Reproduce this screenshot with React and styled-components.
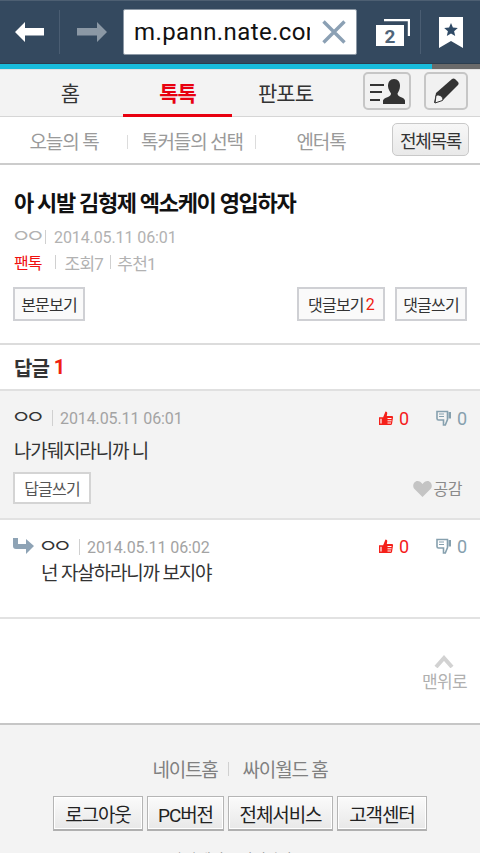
import { createGlobalStyle } from 'styled-components';
import styled from 'styled-components';

const GlobalStyle = createGlobalStyle`
  html, body {
    margin: 0;
    padding: 0;
    height: 853px;
    overflow: hidden;
    background: #fff;
  }
  body {
    font-family: "Roboto", "Noto Sans CJK KR", sans-serif;
  }
`;

const Page = styled.div`
  width: 480px;
  height: 853px;
  overflow: hidden;
`;

const BrowserBar = styled.div`
  height: 62px;
  background: #34495f;
  border-top: 1px solid #4d5f72;
  display: flex;
  align-items: center;
`;

const NavIcon = styled.div`
  width: 59px;
  height: 44px;
  display: flex;
  align-items: center;
  justify-content: center;
  flex: none;
`;

const ForwardIcon = styled(NavIcon)`
  width: 64px;
  border-left: 1px solid #4a5d72;
  margin-right: -1px;
`;

const UrlBox = styled.div`
  width: 234px;
  height: 46px;
  background: #fff;
  border: 1px solid #8d99a6;
  border-radius: 2px;
  display: flex;
  align-items: center;
  padding-left: 10px;
  box-sizing: border-box;
  overflow: hidden;
  flex: none;
`;

const UrlText = styled.div`
  width: 176px;
  margin-right: 12px;
  flex: none;
  overflow: hidden;
  white-space: nowrap;
  font-family: "Roboto", sans-serif;
  font-size: 24px;
  color: #111;
  letter-spacing: 0.4px;
`;

const TabCount = styled.div`
  width: 63px;
  padding-left: 9px;
  box-sizing: border-box;
  height: 44px;
  display: flex;
  align-items: center;
  justify-content: center;
  flex: none;
`;

const BookmarkButton = styled.div`
  width: 59px;
  height: 44px;
  border-left: 1px solid #4a5d72;
  display: flex;
  align-items: center;
  justify-content: center;
  flex: none;
`;

const Progress = styled.div`
  height: 5px;
  background: #6a6a6a;
  border-top: 1px solid #2b3d4e;
`;

const ProgressFill = styled.div`
  height: 5px;
  background: #18bcdc;
`;

const MainNav = styled.div`
  height: 46px;
  background: #f3f3f3;
  border-top: 1px solid #e4e4e4;
  border-bottom: 1px solid #d6d6d6;
  display: flex;
  align-items: stretch;
`;

const MainTab = styled.div`
  width: ${(p) => p.$w}px;
  padding-left: ${(p) => p.$pl || 0}px;
  display: flex;
  align-items: center;
  justify-content: center;
  font-size: 21px;
  letter-spacing: -1px;
  font-weight: ${(p) => (p.$active ? 700 : 400)};
  color: ${(p) => (p.$active ? '#e8000f' : '#333')};
  box-sizing: border-box;
  margin-bottom: -1px;
  border-bottom: 3px solid ${(p) => (p.$active ? '#e8000f' : 'transparent')};
  flex: none;
`;

const IconButton = styled.div`
  width: ${(p) => p.$w}px;
  height: 38px;
  margin-top: 2px;
  margin-left: ${(p) => p.$ml}px;
  box-sizing: border-box;
  border: 2px solid #c6c6c6;
  border-radius: 5px;
  background: #f1f1f1;
  display: flex;
  align-items: center;
  justify-content: center;
  flex: none;
`;

const SubNav = styled.div`
  height: 46px;
  border-bottom: 2px solid #cccccc;
  display: flex;
  align-items: center;
  background: #fff;
`;

const SubTab = styled.div`
  width: ${(p) => p.$w}px;
  text-align: center;
  font-size: 19px;
  letter-spacing: -1.1px;
  color: #9a9a9a;
  flex: none;
  position: relative;
  &::after {
    content: '';
    display: ${(p) => (p.$line ? 'block' : 'none')};
    position: absolute;
    right: 0;
    top: 8px;
    height: 14px;
    width: 1px;
    background: #dcdcdc;
  }
`;

const AllListButton = styled.div`
  width: 77px;
  height: 33px;
  margin-left: 6px;
  margin-top: -1px;
  box-sizing: border-box;
  border: 1px solid #c9c9c9;
  border-radius: 5px;
  background: linear-gradient(#f7f7f7, #e9e9e9);
  display: flex;
  align-items: center;
  justify-content: center;
  font-size: 18px;
  letter-spacing: -1.3px;
  color: #333;
  flex: none;
`;

const Article = styled.div`
  height: 180px;
  padding: 24px 13px 0 13px;
  box-sizing: border-box;
  border-bottom: 2px solid #dcdcdc;
`;

const Title = styled.div`
  font-size: 22px;
  line-height: 30px;
  font-weight: 700;
  letter-spacing: -1.33px;
  color: #111;
  white-space: nowrap;
  margin-left: 1px;
`;

const MetaRow = styled.div`
  display: flex;
  align-items: center;
  margin-top: ${(p) => p.$mt}px;
  margin-left: 1px;
  height: 20px;
  font-size: 16px;
  color: #b2b2b2;
`;

// the jamo are wide flat rings in the reference, hence the squash
const Author = styled.span`
  display: block;
  width: 26px;
  flex: none;
  height: 20px;
  line-height: 20px;
  font-size: 22px;
  letter-spacing: -6px;
  white-space: nowrap;
  color: ${(p) => p.$color || '#b2b2b2'};
  transform: scaleY(0.78);
  text-indent: -3px;
`;

const Sep = styled.span`
  width: 1px;
  height: ${(p) => p.$h || 14}px;
  background: #d0d0d0;
  margin: ${(p) => p.$m};
  flex: none;
`;

const MetaDate = styled.span`
  letter-spacing: -0.1px;
`;

const Category = styled.span`
  color: #f01010;
  font-size: 16px;
  letter-spacing: -1px;
`;

const Stat = styled.span`
  font-size: 17px;
  letter-spacing: -0.7px;
  color: #b2b2b2;
`;

const ActionRow = styled.div`
  display: flex;
  margin-top: 15px;
`;

const OutlineButton = styled.div`
  height: 34px;
  width: ${(p) => p.$w}px;
  margin-left: ${(p) => p.$ml || 0}px;
  box-sizing: border-box;
  border: 2px solid #cfd0d4;
  background: #fafafa;
  display: flex;
  align-items: center;
  justify-content: center;
  font-size: 16px;
  letter-spacing: -0.8px;
  color: #333;
  flex: none;
`;

const Red = styled.span`
  color: #f02010;
  margin-left: 2px;
`;

const ReplyHeader = styled.div`
  height: 44px;
  padding-left: 14px;
  display: flex;
  align-items: center;
  font-size: 20px;
  font-weight: 700;
  letter-spacing: -1px;
  color: #333;
  border-bottom: 2px solid #e0e0e0;
`;

const RedCount = styled.span`
  color: #f02010;
  margin-left: 5px;
`;

const Comment = styled.div`
  height: ${(p) => p.$h}px;
  background: ${(p) => (p.$grey ? '#f3f3f3' : '#fff')};
  border-bottom: 2px solid #e2e2e2;
  padding: ${(p) => p.$pad};
`;

const CommentTop = styled.div`
  display: flex;
  align-items: center;
  height: 24px;
`;

const ReplyArrow = styled.div`
  width: 28px;
  flex: none;
  display: flex;
  margin-top: -3px;
`;

const CommentDate = styled.span`
  font-size: 16px;
  color: #a3a3a3;
  white-space: nowrap;
  letter-spacing: -0.1px;
`;

const Votes = styled.div`
  margin-left: auto;
  display: flex;
  align-items: center;
  margin-top: ${(p) => p.$mt || 0}px;
`;

const VoteCount = styled.span`
  font-size: 18px;
  width: ${(p) => p.$w}px;
  margin-left: 5px;
  color: ${(p) => p.$color};
`;

const CommentText = styled.div`
  font-size: 19px;
  letter-spacing: -1.15px;
  color: #333;
  line-height: 26px;
  margin-top: ${(p) => p.$mt}px;
  margin-left: ${(p) => p.$ml || 0}px;
  white-space: nowrap;
`;

const CommentActions = styled.div`
  display: flex;
  align-items: center;
  margin-top: 7px;
  margin-left: -1px;
  padding-right: 4px;
`;

const ReplyButton = styled.div`
  width: 78px;
  height: 32px;
  box-sizing: border-box;
  border: 2px solid #d4d4d4;
  background: #fff;
  display: flex;
  align-items: center;
  justify-content: center;
  font-size: 16px;
  letter-spacing: -0.8px;
  color: #555;
`;

const Like = styled.div`
  margin-left: auto;
  display: flex;
  align-items: center;
  gap: 2px;
  font-size: 16px;
  letter-spacing: -0.5px;
  color: #8a8a8a;
`;

const TopLinkArea = styled.div`
  height: 68px;
  display: flex;
  flex-direction: column;
  align-items: flex-end;
  padding: 36px 13px 0 0;
  border-bottom: 2px solid #c6c6c6;
`;

const TopLink = styled.div`
  display: flex;
  flex-direction: column;
  align-items: center;
  gap: 0;
  font-size: 17px;
  letter-spacing: -0.6px;
  color: #b0b0b0;
`;

const Footer = styled.div`
  background: #f3f3f3;
  height: 129px;
  padding-top: 30px;
  box-sizing: border-box;
`;

const FooterLinks = styled.div`
  display: flex;
  justify-content: center;
  align-items: center;
  height: 26px;
  font-size: 19px;
  letter-spacing: -1.2px;
  color: #808080;
`;

const FooterButtons = styled.div`
  display: flex;
  justify-content: center;
  gap: 4px;
  margin-top: 15px;
`;

const FooterButton = styled.div`
  width: ${(p) => p.$w}px;
  height: 35px;
  box-sizing: border-box;
  border: 1px solid #b5b5b5;
  border-bottom: 2px solid #b0b0b0;
  box-shadow: inset 0 0 0 1px #fff;
  background: linear-gradient(#fbfbfb, #e8e8e8);
  display: flex;
  align-items: center;
  justify-content: center;
  font-size: 19px;
  letter-spacing: -1.1px;
  color: #222;
`;

const FooterCopy = styled.div`
  margin-top: 19px;
  line-height: 18px;
  text-align: center;
  font-size: 14px;
  color: #888;
`;

const ThumbUp = ({ color }) => (
  <svg width="16" height="16" viewBox="0 0 16 16">
    <path d="M1.700 8h2.600v6.300H1.700z" fill="#fff" stroke={color} strokeWidth="1.400" />
    <path
      d="M5 7.500 7.500 1.500c1.400 0 2 1 1.700 2.200L8.800 6H14c1 0 1.300.9 1 1.700L14 14c-.2.700-.7 1-1.300 1H5z"
      fill={color}
    />
    <path d="M9.500 8.500h4M9.500 10.800h4M9.500 13h3.500" stroke="#fff" strokeWidth="1" />
  </svg>
);

const ThumbDown = ({ color }) => (
  <svg width="16" height="16" viewBox="0 0 16 16">
    <path
      d="M1 1.500h10.500v8l-2.200 5.500H7.500V10H2.500C1.500 10 1 9.300 1 8.500z"
      fill="none"
      stroke={color}
      strokeWidth="1.600"
    />
    <path d="M12.500 2H15v6.500h-2.500z" fill={color} />
    <path d="M3 4h5M3 6.500h5" stroke={color} strokeWidth="1" />
  </svg>
);

const VoteBlock = ({ mt }) => (
  <Votes $mt={mt}>
    <ThumbUp color="#f5201a" />
    <VoteCount $w={37} $color="#f5201a">0</VoteCount>
    <ThumbDown color="#86a0ae" />
    <VoteCount $w={9} $color="#86a0ae">0</VoteCount>
  </Votes>
);

const App = () => {
  return (
    <Page>
      <GlobalStyle />
      <BrowserBar>
        <NavIcon>
          <svg width="30" height="20" viewBox="0 0 30 20">
            <path d="M0 10 10 0v6h19v7.500H10V20z" fill="#fff" />
          </svg>
        </NavIcon>
        <ForwardIcon>
          <svg width="30" height="20" viewBox="0 0 30 20">
            <path d="M30 10 20 0v6H0v7.500h20V20z" fill="#8b98a5" />
          </svg>
        </ForwardIcon>
        <UrlBox>
          <UrlText>m.pann.nate.com</UrlText>
          <svg width="24" height="24" viewBox="0 0 24 24">
            <path d="M1.500 1.500 22.500 22.500M22.500 1.500 1.500 22.500" stroke="#8ba0b4" strokeWidth="3.400" />
          </svg>
        </UrlBox>
        <TabCount>
          <svg width="34" height="27" viewBox="0 0 34 27">
            <path d="M8 0h26v17h-2.200V2.200H8z" fill="#fff" />
            <path d="M0 6h28v21H0z" fill="#fff" />
            <text x="14" y="24" fontFamily="Roboto, sans-serif" fontWeight="700" fontSize="19" fill="#4f6479" textAnchor="middle">2</text>
          </svg>
        </TabCount>
        <BookmarkButton>
          <svg width="24" height="31" viewBox="0 0 24 31">
            <path d="M0 0h24v31L12 24 0 31z" fill="#fff" />
            <path d="m12 6 1.900 4.600 4.900.4-3.700 3.200 1.100 4.800-4.200-2.600-4.200 2.600 1.100-4.800-3.700-3.200 4.900-.4z" fill="#2f4a66" />
          </svg>
        </BookmarkButton>
      </BrowserBar>
      <Progress>
        <ProgressFill style={{ width: 432 }} />
      </Progress>
      <MainNav>
        <MainTab $w={123} $pl={17}>홈</MainTab>
        <MainTab $w={109} $active>톡톡</MainTab>
        <MainTab $w={107}>판포토</MainTab>
        <IconButton $w={48} $ml={24}>
          <svg width="35" height="27" viewBox="0 0 35 27">
            <path d="M0 6h14v2H0zM0 13h12v2H0zM0 21h10v2H0z" fill="#333" />
            <path d="M24 1c4 0 6 3 6 7 0 3-1.500 6-2.500 7.500 0 1.500 1 2.500 3 3.500 3 1 4 2 4.500 3.500V26H13v-3.500c.5-1.500 2-2.500 5-3.500 2-1 3-2 3-3.500C20 14 18 11 18 8c0-4 2-7 6-7z" fill="#333" />
          </svg>
        </IconButton>
        <IconButton $w={44} $ml={13}>
          <svg width="28" height="28" viewBox="0 0 28 28">
            <path d="M20 2c1-.8 2-.8 3 0l3 3c.8 1 .8 2 0 3L11 23l-9 3 2-10z" fill="#333" />
            <path d="M4 18.500c2-1 4-.5 5.500 1s1.500 3 1 4L3 26z" fill="#f3f3f3" stroke="#333" strokeWidth="1" />
          </svg>
        </IconButton>
      </MainNav>
      <SubNav>
        <SubTab $w={128} $line>오늘의 톡</SubTab>
        <SubTab $w={128} $line>톡커들의 선택</SubTab>
        <SubTab $w={130}>엔터톡</SubTab>
        <AllListButton>전체목록</AllListButton>
      </SubNav>
      <Article>
        <Title>아 시발 김형제 엑소케이 영입하자</Title>
        <MetaRow $mt={8}>
          <Author>ㅇㅇ</Author>
          <Sep $m="0 8px 0 5px" />
          <MetaDate>2014.05.11 06:01</MetaDate>
        </MetaRow>
        <MetaRow $mt={5}>
          <Category>팬톡</Category>
          <Sep $m="0 8px 0 14px" />
          <Stat>조회7</Stat>
          <Sep $m="0 6px 0 7px" />
          <Stat>추천1</Stat>
        </MetaRow>
        <ActionRow>
          <OutlineButton $w={72}>본문보기</OutlineButton>
          <OutlineButton $w={88} $ml={212}>댓글보기<Red>2</Red></OutlineButton>
          <OutlineButton $w={72} $ml={10}>댓글쓰기</OutlineButton>
        </ActionRow>
      </Article>
      <ReplyHeader>답글<RedCount>1</RedCount></ReplyHeader>
      <Comment $grey $h={112} $pad="15px 14px 0 14px">
        <CommentTop>
          <Author $color="#333">ㅇㅇ</Author>
          <Sep $h={16} $m="0 7px 0 12px" />
          <CommentDate>2014.05.11 06:01</CommentDate>
          <VoteBlock />
        </CommentTop>
        <CommentText $mt={9}>나가뒈지라니까 니</CommentText>
        <CommentActions>
          <ReplyButton>답글쓰기</ReplyButton>
          <Like>
            <svg width="19" height="17" viewBox="0 0 19 17">
              <path d="M9.500 17 1 8.500C-1 5.500 1 1 4.500 1c2 0 3.500 1 5 3 1.500-2 3-3 5-3C18 1 20 5.500 18 8.500z" fill="#c4c4c4" />
            </svg>
            공감
          </Like>
        </CommentActions>
      </Comment>
      <Comment $h={82} $pad="15px 14px 0 13px">
        <CommentTop>
          <ReplyArrow>
            <svg width="21" height="16" viewBox="0 0 21 16">
              <path d="M0 0h5v6h8V1l8 7-8 8v-5H3c-2 0-3-1-3-3z" fill="#8ea3b5" />
            </svg>
          </ReplyArrow>
          <Author $color="#333">ㅇㅇ</Author>
          <Sep $h={16} $m="0 7px 0 12px" />
          <CommentDate>2014.05.11 06:02</CommentDate>
          <VoteBlock mt={-2} />
        </CommentTop>
        <CommentText $mt={2} $ml={28}>넌 자살하라니까 보지야</CommentText>
      </Comment>
      <TopLinkArea>
        <TopLink>
          <svg width="20" height="13" viewBox="0 0 20 13">
            <path d="M2 12 10 3l8 9" fill="none" stroke="#d2d2d2" strokeWidth="4" />
          </svg>
          맨위로
        </TopLink>
      </TopLinkArea>
      <Footer>
        <FooterLinks>
          네이트홈
          <Sep $m="2px 14px 0 10px" />
          싸이월드 홈
        </FooterLinks>
        <FooterButtons>
          <FooterButton $w={90}>로그아웃</FooterButton>
          <FooterButton $w={77}>PC버전</FooterButton>
          <FooterButton $w={105}>전체서비스</FooterButton>
          <FooterButton $w={90}>고객센터</FooterButton>
        </FooterButtons>
        <FooterCopy>(주)네이트 사업자정보</FooterCopy>
      </Footer>
    </Page>
  );
};

export default App;
